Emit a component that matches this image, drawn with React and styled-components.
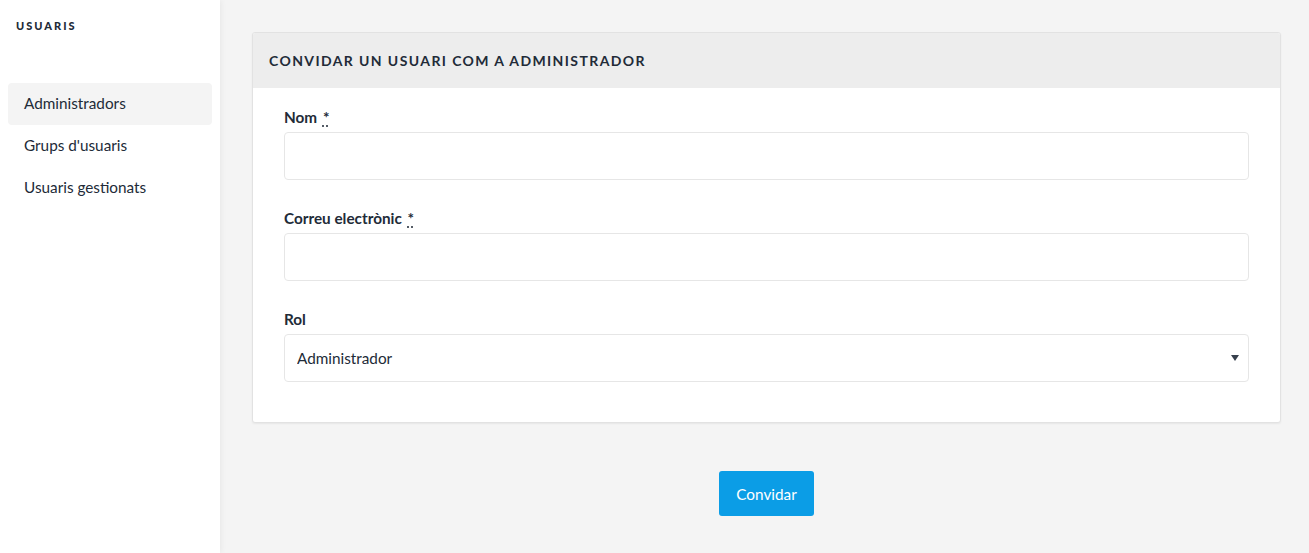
import React, { useState } from 'react';
import styled, { createGlobalStyle } from 'styled-components';

const GlobalStyle = createGlobalStyle`
  html, body {
    margin: 0;
    padding: 0;
    background: #f4f4f4;
    font-family: Lato, 'Open Sans', sans-serif;
    color: #222b38;
  }
`;

const NAV = ['Administradors', "Grups d'usuaris", 'Usuaris gestionats'];

export default function App() {
  const [active, setActive] = useState(0);
  const [form, setForm] = useState({ name: '', email: '', role: 'admin' });

  const handleChange = (evt) => {
    const { name, value } = evt.target;
    setForm((prev) => ({ ...prev, [name]: value }));
  };

  return (
    <>
      <GlobalStyle />
      <Layout>
        <Sidebar>
          <SidebarTitle>Usuaris</SidebarTitle>
          <Nav>
            {NAV.map((item, i) => (
              <NavItem key={item} $active={i === active} onClick={() => setActive(i)}>
                {item}
              </NavItem>
            ))}
          </Nav>
        </Sidebar>
        <Main>
          <Card>
            <CardHeader>Convidar un usuari com a administrador</CardHeader>
            <CardBody>
              <Field>
                <Label>
                  Nom <Required title='obligatori'>*</Required>
                </Label>
                <Input name='name' value={form.name} onChange={handleChange} />
              </Field>
              <Field>
                <Label>
                  Correu electrònic <Required title='obligatori'>*</Required>
                </Label>
                <Input name='email' type='email' value={form.email} onChange={handleChange} />
              </Field>
              <Field>
                <Label>Rol</Label>
                <SelectWrap>
                  <Select name='role' value={form.role} onChange={handleChange}>
                    <option value='admin'>Administrador</option>
                  </Select>
                  <Caret />
                </SelectWrap>
              </Field>
            </CardBody>
          </Card>
          <Actions>
            <Button>Convidar</Button>
          </Actions>
        </Main>
      </Layout>
    </>
  );
}

const Layout = styled.div`
  display: flex;
  min-height: 553px;
`;

const Sidebar = styled.aside`
  width: 220px;
  flex-shrink: 0;
  background: #fff;
  box-shadow: 1px 0 6px rgba(0, 0, 0, 0.06);
  position: relative;
  z-index: 1;
  padding: 0 8px;
  box-sizing: border-box;
`;

const SidebarTitle = styled.div`
  padding: 19px 8px 0;
  font-size: 11px;
  font-weight: 900;
  letter-spacing: 2px;
  text-transform: uppercase;
  line-height: 14px;
  color: #222b38;
`;

const Nav = styled.nav`
  margin-top: 50px;
  display: flex;
  flex-direction: column;
`;

const NavItem = styled.a`
  display: block;
  height: 42px;
  line-height: 41px;
  padding: 0 16px;
  border-radius: 4px;
  font-size: 15.3px;
  color: #222b38;
  cursor: pointer;
  background: ${(p) => (p.$active ? '#f4f4f4' : 'transparent')};
`;

const Main = styled.main`
  flex: 1;
  padding: 32px 28px 0 32px;
`;

const Card = styled.section`
  background: #fff;
  border: 1px solid #e2e2e2;
  border-radius: 3px;
  box-shadow: 0 1px 2px rgba(0, 0, 0, 0.06);
  overflow: hidden;
`;

const CardHeader = styled.h2`
  margin: 0;
  height: 55px;
  line-height: 55px;
  padding: 0 16px;
  background: #ededed;
  font-size: 14px;
  font-weight: 700;
  letter-spacing: 1.4px;
  text-transform: uppercase;
  color: #222b38;
`;

const CardBody = styled.div`
  padding: 19px 31px 40px;
  display: flex;
  flex-direction: column;
  gap: 28px;
`;

const Field = styled.div`
  display: flex;
  flex-direction: column;
`;

const Label = styled.label`
  font-size: 15.3px;
  font-weight: 700;
  line-height: 21px;
  margin-bottom: 4px;
  color: #222b38;
`;

const Required = styled.abbr`
  text-decoration: underline dotted;
  text-underline-offset: 3px;
  cursor: help;
  margin-left: 2px;
`;

const Input = styled.input`
  height: 48px;
  box-sizing: border-box;
  border: 1px solid #e6e6e6;
  border-radius: 4px;
  padding: 0 12px;
  font: inherit;
  font-size: 15px;
  color: #222b38;
  outline: none;
`;

const SelectWrap = styled.div`
  position: relative;
`;

const Select = styled.select`
  width: 100%;
  height: 48px;
  box-sizing: border-box;
  border: 1px solid #e6e6e6;
  border-radius: 4px;
  padding: 0 12px;
  background: #fff;
  font: inherit;
  font-size: 15.3px;
  color: #222b38;
  appearance: none;
  outline: none;
`;

const Caret = styled.span`
  position: absolute;
  right: 10px;
  top: 21px;
  width: 0;
  height: 0;
  border-left: 4.5px solid transparent;
  border-right: 4.5px solid transparent;
  border-top: 6px solid #37404d;
  pointer-events: none;
`;

const Actions = styled.div`
  display: flex;
  justify-content: center;
  margin-top: 48px;
`;

const Button = styled.button`
  width: 95px;
  height: 45px;
  border: none;
  border-radius: 3px;
  background: #0b9de6;
  color: #fff;
  font: inherit;
  font-size: 15.3px;
  cursor: pointer;
`;
